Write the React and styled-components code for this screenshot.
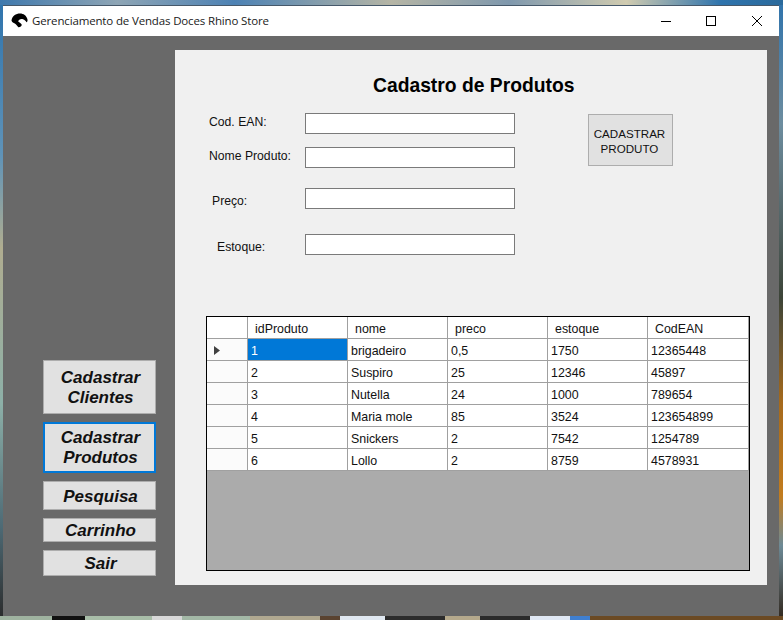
import React from "react";
import styled, { createGlobalStyle } from "styled-components";

const GlobalStyle = createGlobalStyle`
  html, body {
    margin: 0;
    padding: 0;
    background: #6a6a6a;
  }
  * {
    box-sizing: border-box;
  }
`;

// the desktop wallpaper only shows as a thin strip around the window
const Desktop = styled.div`
  width: 783px;
  height: 620px;
  padding: 5px 4px 4px 3px;
  overflow: hidden;
  background:
    linear-gradient(90deg, #3f79ad 0%, #8ea5b5 15%, #4d82b4 30%, #b5b5a5 50%, #7f98ad 65%, #d0cbb0 80%, #2f74ad 92%, #2a6a9c 100%) top / 100% 5px no-repeat,
    linear-gradient(90deg, #9fb3a0 0 52px, #111111 52px 85px, #a8bda8 85px 152px, #d8d8d8 152px 182px, #a3b8a6 182px 250px, #b0a890 250px 320px, #5a4330 320px 340px, #dfe7f0 340px 385px, #2c2c2c 385px 445px, #b5a98c 445px 480px, #2b2b2b 480px 530px, #dfe7f3 530px 570px, #3f7fd0 570px 590px, #6b4a24 590px 783px) bottom / 100% 4px no-repeat,
    linear-gradient(180deg, #2f74ad 0%, #5f93b8 25%, #b0ad90 40%, #8db0a8 65%, #4d6a75 85%, #2a2a2a 100%) left / 3px 100% no-repeat,
    linear-gradient(180deg, #2f74ad 0%, #6d8d9f 20%, #3c4438 48%, #a66a1c 65%, #c27c1e 80%, #6d8a96 88%, #30261c 100%) right / 4px 100% no-repeat;
`;

const Window = styled.div`
  width: 776px;
  height: 611px;
  display: flex;
  flex-direction: column;
  background: #696969;
  border-top: 1px solid #46586a;
`;

const TitleBar = styled.div`
  height: 30px;
  flex: none;
  display: flex;
  align-items: center;
  background: #ffffff;
  padding-left: 8px;
`;

const AppIcon = styled.svg`
  width: 17px;
  height: 15px;
  flex: none;
  margin-top: -1px;
`;

const WindowTitle = styled.span`
  margin: -1px 0 0 4px;
  font-family: "Open Sans", "Noto Sans", sans-serif;
  font-size: 11.5px;
  letter-spacing: -0.15px;
  color: #1a1a1a;
  white-space: nowrap;
`;

const Controls = styled.div`
  margin-left: auto;
  margin-right: -0.5px;
  display: flex;
`;

const ControlButton = styled.div`
  width: 45.5px;
  height: 30px;
  display: flex;
  align-items: center;
  justify-content: center;
`;

const Body = styled.div`
  flex: 1;
  display: flex;
  min-height: 0;
`;

const Sidebar = styled.div`
  width: 172px;
  flex: none;
  display: flex;
  flex-direction: column;
  justify-content: flex-end;
  gap: 8px;
  padding: 0 0 40px 40px;
`;

const NavButton = styled.button`
  width: 113px;
  height: ${(props) => props.$height}px;
  padding: ${(props) => (props.$focused ? 0 : 2)}px 0 0 2px;
  background: #e1e1e1;
  border: ${(props) => (props.$focused ? "2px solid #0078d7" : "1px solid #adadad")};
  font-family: "Liberation Sans", Arial, sans-serif;
  font-size: 17px;
  font-weight: bold;
  font-style: italic;
  line-height: 20px;
  color: #111111;
`;

const Panel = styled.div`
  flex: 1;
  display: flex;
  flex-direction: column;
  margin: 14px 12px 31px 0;
  background: #f0f0f0;
`;

const Title = styled.h1`
  margin: 24px 0 15px 198px;
  font-family: "Liberation Sans", Arial, sans-serif;
  font-size: 19.3px;
  line-height: 24px;
  font-weight: bold;
  color: #000000;
`;

const TopArea = styled.div`
  display: flex;
  align-items: flex-start;
  padding-left: 34px;
`;

const Form = styled.div`
  display: flex;
  flex-direction: column;
`;

const FormRow = styled.div`
  display: flex;
  align-items: flex-start;
  margin-top: ${(props) => props.$gap}px;
`;

const FieldLabel = styled.label`
  width: 96px;
  padding-left: ${(props) => props.$indent}px;
  margin-top: ${(props) => props.$top}px;
  font-family: "Liberation Sans", Arial, sans-serif;
  font-size: 12.2px;
  line-height: 14px;
  color: #111111;
`;

const TextInput = styled.input`
  width: 210px;
  height: 21px;
  padding: 0 3px;
  background: #ffffff;
  border: 1px solid #7a7a7a;
  outline: none;
`;

const SubmitButton = styled.button`
  width: 85px;
  height: 52px;
  margin: 1px 0 0 73px;
  padding: 2px 2px 0 0;
  background: #e1e1e1;
  border: 1px solid #adadad;
  font-family: "Liberation Sans", Arial, sans-serif;
  font-size: 11.6px;
  line-height: 15px;
  color: #111111;
`;

const Grid = styled.div`
  width: 544px;
  height: 255px;
  margin: 61px 0 0 31px;
  background: #ababab;
  border: 1px solid #000000;
`;

const GridRow = styled.div`
  display: grid;
  grid-template-columns: 41px repeat(4, 100px) 101px;
  height: 22px;
`;

const Cell = styled.div`
  display: flex;
  align-items: center;
  padding-top: 2px;
  padding-left: ${(props) => (props.$header ? 7 : 3)}px;
  background: ${(props) => (props.$selected ? "#0078d7" : "#ffffff")};
  border-right: 1px solid #a0a0a0;
  border-bottom: 1px solid #a0a0a0;
  font-family: "Liberation Sans", Arial, sans-serif;
  font-size: 12.4px;
  color: ${(props) => (props.$selected ? "#ffffff" : "#111111")};
  white-space: nowrap;
`;

const RowHeader = styled(Cell)`
  padding-left: 7px;
  background: ${(props) => (props.$top ? "#ffffff" : "#fbfbfb")};
`;

const RowArrow = styled.svg`
  width: 6px;
  height: 9px;
`;

const columns = ["idProduto", "nome", "preco", "estoque", "CodEAN"];

const products = [
  ["1", "brigadeiro", "0,5", "1750", "12365448"],
  ["2", "Suspiro", "25", "12346", "45897"],
  ["3", "Nutella", "24", "1000", "789654"],
  ["4", "Maria mole", "85", "3524", "123654899"],
  ["5", "Snickers", "2", "7542", "1254789"],
  ["6", "Lollo", "2", "8759", "4578931"],
];

const fields = [
  { label: "Cod. EAN:", gap: 0, indent: 0, top: 2 },
  { label: "Nome Produto:", gap: 13, indent: 0, top: 2 },
  { label: "Preço:", gap: 20, indent: 3, top: 6 },
  { label: "Estoque:", gap: 25, indent: 8, top: 6 },
];

const App = () => (
  <Desktop>
    <GlobalStyle />
    <Window>
      <TitleBar>
        <AppIcon viewBox="0 0 17 15">
          <path
            d="M0.5 7.5C1 3 5 0.5 9 0.5C12.5 0.5 15.5 2.5 16.5 6.5C16.7 7.8 16.3 9 15.5 9.3C14.8 8 13.6 6.8 12 6.3C9.6 5.6 7.5 6.8 7.2 8.6C8.6 9.8 10 10.5 10.8 11.8C10.6 13.4 9 14.5 7.4 14.3C6.2 13 5.2 11.2 3.8 10.4C2.6 10 1 9.4 0.5 7.5Z"
            fill="#000000"
          />
        </AppIcon>
        <WindowTitle>Gerenciamento de Vendas Doces Rhino Store</WindowTitle>
        <Controls>
          <ControlButton>
            <svg width="10" height="10" viewBox="0 0 10 10">
              <path d="M0 5.5H10" stroke="#000000" strokeWidth="1" />
            </svg>
          </ControlButton>
          <ControlButton>
            <svg width="10" height="10" viewBox="0 0 10 10">
              <rect x="0.5" y="0.5" width="9" height="9" fill="none" stroke="#000000" strokeWidth="1" />
            </svg>
          </ControlButton>
          <ControlButton>
            <svg width="10" height="10" viewBox="0 0 10 10">
              <path d="M0 0L10 10M10 0L0 10" stroke="#000000" strokeWidth="1" />
            </svg>
          </ControlButton>
        </Controls>
      </TitleBar>
      <Body>
        <Sidebar>
          <NavButton $height={54}>
            Cadastrar
            <br />
            Clientes
          </NavButton>
          <NavButton $height={51} $focused>
            Cadastrar
            <br />
            Produtos
          </NavButton>
          <NavButton $height={29}>Pesquisa</NavButton>
          <NavButton $height={24}>Carrinho</NavButton>
          <NavButton $height={26}>Sair</NavButton>
        </Sidebar>
        <Panel>
          <Title>Cadastro de Produtos</Title>
          <TopArea>
            <Form>
              {fields.map((field) => (
                <FormRow key={field.label} $gap={field.gap}>
                  <FieldLabel $indent={field.indent} $top={field.top}>
                    {field.label}
                  </FieldLabel>
                  <TextInput />
                </FormRow>
              ))}
            </Form>
            <SubmitButton>
              CADASTRAR
              <br />
              PRODUTO
            </SubmitButton>
          </TopArea>
          <Grid>
            <GridRow>
              <RowHeader $top />
              {columns.map((column) => (
                <Cell key={column} $header>
                  {column}
                </Cell>
              ))}
            </GridRow>
            {products.map((product, rowIndex) => (
              <GridRow key={product[0]}>
                <RowHeader>
                  {rowIndex === 0 && (
                    <RowArrow viewBox="0 0 6 9">
                      <path d="M0 0L6 4.5L0 9Z" fill="#404040" />
                    </RowArrow>
                  )}
                </RowHeader>
                {product.map((value, colIndex) => (
                  <Cell key={columns[colIndex]} $selected={rowIndex === 0 && colIndex === 0}>
                    {value}
                  </Cell>
                ))}
              </GridRow>
            ))}
          </Grid>
        </Panel>
      </Body>
    </Window>
  </Desktop>
);

export default App;
